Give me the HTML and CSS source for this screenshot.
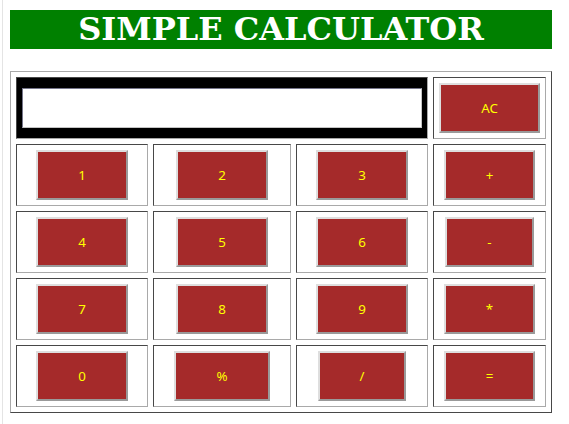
FILE: index.html
```html
<!DOCTYPE html>
<html lang="en">
<head>
<meta charset="utf-8">
<title>Simple Calculator</title>
<link rel="stylesheet" href="styles.css">
</head>
<body>
<div class="page">
  <h1 class="title">SIMPLE CALCULATOR</h1>
  <div class="calc">
    <div class="cell display-cell"><input class="display" type="text"></div>
    <div class="cell"><button class="key">AC</button></div>
    <div class="cell"><button class="key">1</button></div>
    <div class="cell"><button class="key">2</button></div>
    <div class="cell"><button class="key">3</button></div>
    <div class="cell"><button class="key">+</button></div>
    <div class="cell"><button class="key">4</button></div>
    <div class="cell"><button class="key">5</button></div>
    <div class="cell"><button class="key">6</button></div>
    <div class="cell"><button class="key">-</button></div>
    <div class="cell"><button class="key">7</button></div>
    <div class="cell"><button class="key">8</button></div>
    <div class="cell"><button class="key">9</button></div>
    <div class="cell"><button class="key">*</button></div>
    <div class="cell"><button class="key">0</button></div>
    <div class="cell"><button class="key">%</button></div>
    <div class="cell"><button class="key">/</button></div>
    <div class="cell"><button class="key">=</button></div>
  </div>
</div>
</body>
</html>
```

FILE: styles.css
```css
html, body {
  margin: 0;
  padding: 0;
  background: #ffffff;
}

.page {
  margin-left: 2px;
  border-left: 1px solid #e4e4e4;
  padding: 10px 0 0 7px;
  min-height: 424px;
  box-sizing: border-box;
}

.title {
  width: 542px;
  margin: 0 0 22px 0;
  background: #008000;
  color: #ffffff;
  text-align: center;
  font-family: "DejaVu Serif", serif;
  font-weight: bold;
  font-size: 32px;
  line-height: 39px;
}

.calc {
  width: 542px;
  box-sizing: border-box;
  display: grid;
  grid-template-columns: 132px 138px 132px 113px;
  grid-auto-rows: 62px;
  gap: 5px;
  padding: 5px;
  border: 1px solid;
  border-color: #a9a9a9 #474747 #474747 #a9a9a9;
}

.cell {
  box-sizing: border-box;
  border: 1px solid;
  border-color: #474747 #a9a9a9 #a9a9a9 #474747;
  padding: 5px;
  display: flex;
  align-items: center;
  justify-content: center;
}

.display-cell {
  grid-column: span 3;
  background: #000000;
}

.display {
  box-sizing: border-box;
  width: 400px;
  height: 40px;
  margin: 0;
  border: 1px solid;
  border-color: #76768a #c4c4c4 #c4c4c4 #76768a;
  background: #ffffff;
}

.key {
  box-sizing: border-box;
  height: 50px;
  margin: 0;
  padding: 0 40px;
  background: #a52a2a;
  color: #ffff00;
  font-family: "Noto Sans", sans-serif;
  font-size: 13.333px;
  line-height: 16px;
  border: 2px solid;
  border-color: #dedede #9a9a9a #9a9a9a #dedede;
}
```
